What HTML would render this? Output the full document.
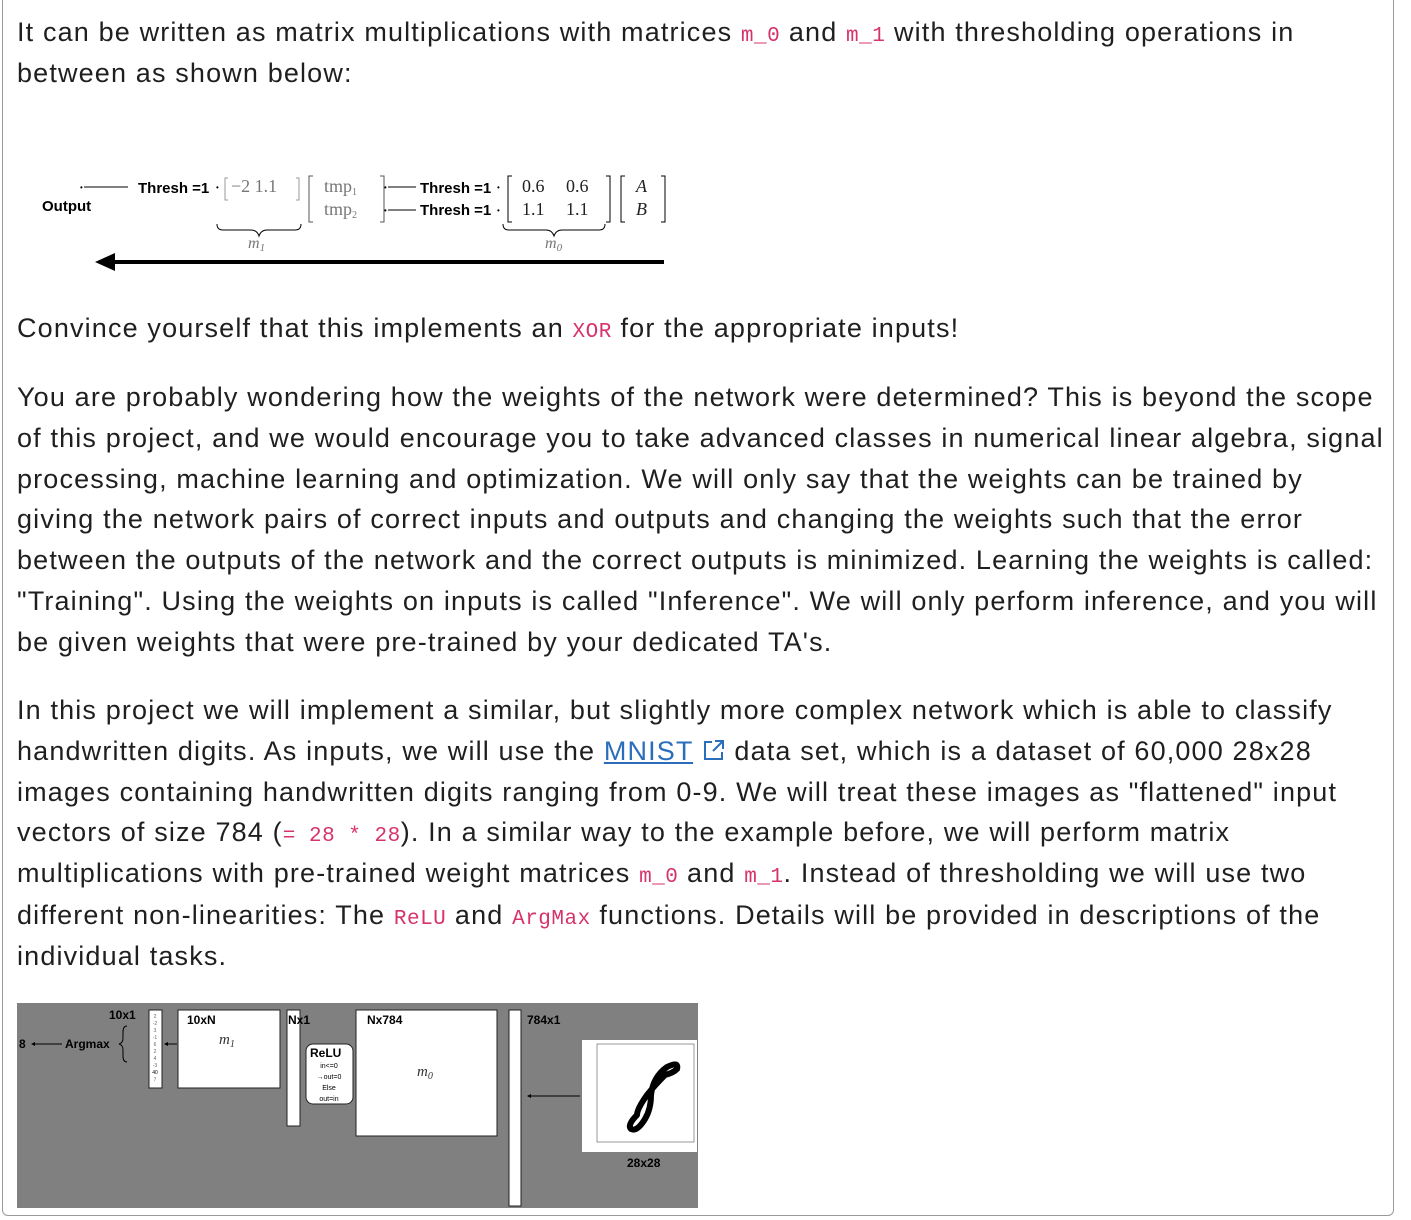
<!DOCTYPE html>
<html><head><meta charset="utf-8"><style>
body{margin:0;background:#fff;width:1411px;height:1220px;position:relative;overflow:hidden;font-family:"Liberation Sans",sans-serif;}
.frame{position:absolute;left:2px;top:-6px;width:1390px;height:1220px;border:1px solid #9a9a9a;border-radius:6px;}
.l{position:absolute;left:17px;height:40px;line-height:40px;white-space:nowrap;font-size:27px;letter-spacing:1.15px;color:#1f1f1f;}
code{font-family:"Liberation Mono",monospace;color:#d6336c;font-size:21px;letter-spacing:0.5px;}
a{color:#2a6ebb;text-decoration:underline;}
</style></head><body>
<div class="frame"></div>
<div class="l" style="top:12px">It can be written as matrix multiplications with matrices <code>m_0</code> and <code>m_1</code> with thresholding operations in</div>
<div class="l" style="top:53px">between as shown below:</div>

<svg style="position:absolute;left:0;top:160px" width="700" height="120" font-family="Liberation Sans,sans-serif">
<g stroke="#000" stroke-width="1" fill="none">
<line x1="84" y1="27" x2="128" y2="27"/>
<line x1="388" y1="27" x2="416" y2="27"/><line x1="388" y1="50" x2="416" y2="50"/>
<path d="M228 18h-3v22h3M296 18h3v22h-3" stroke="#999"/>
<path d="M313 16h-4v46h4M380 16h4v46h-4" stroke="#555"/>
<path d="M512 16h-4v46h4M606 16h4v46h-4"/>
<path d="M625 16h-4v46h4M661 16h4v46h-4"/>
<path d="M217 64q0 6 6 6h28q6 0 8 6q2-6 8-6h28q6 0 6-6"/>
<path d="M503 64q0 6 6 6h37q6 0 8 6q2-6 8-6h37q6 0 6-6"/>
</g>
<g font-size="8"><text x="80" y="30">•</text><text x="216" y="30">•</text><text x="384" y="30">•</text><text x="384" y="53">•</text><text x="497" y="30">•</text><text x="497" y="53">•</text></g>
<g font-size="15" font-weight="bold">
<text x="42" y="51">Output</text>
<text x="138" y="33">Thresh =1</text>
<text x="420" y="33">Thresh =1</text>
<text x="420" y="55">Thresh =1</text>
</g>
<g font-family="Liberation Serif,serif" font-size="18" fill="#777">
<text x="231" y="32">−2  1.1</text>
<text x="324" y="32">tmp<tspan font-size="10" dy="3">1</tspan></text>
<text x="324" y="55">tmp<tspan font-size="10" dy="3">2</tspan></text>
<text x="248" y="88" font-style="italic" font-size="16">m<tspan font-size="11" dy="3">1</tspan></text>
<text x="545" y="88" font-style="italic" font-size="16">m<tspan font-size="11" dy="3">0</tspan></text>
</g>
<g font-family="Liberation Serif,serif" font-size="18" fill="#222">
<text x="522" y="32">0.6</text><text x="566" y="32">0.6</text>
<text x="522" y="55">1.1</text><text x="566" y="55">1.1</text>
<text x="636" y="32" font-style="italic">A</text><text x="636" y="55" font-style="italic">B</text>
</g>
<line x1="110" y1="102" x2="664" y2="102" stroke="#000" stroke-width="4"/>
<path d="M95 102l20-9v18z" fill="#000"/>
</svg>

<div class="l" style="top:308px">Convince yourself that this implements an <code>XOR</code> for the appropriate inputs!</div>

<div class="l" style="top:377px">You are probably wondering how the weights of the network were determined? This is beyond the scope</div>
<div class="l" style="top:418px">of this project, and we would encourage you to take advanced classes in numerical linear algebra, signal</div>
<div class="l" style="top:459px">processing, machine learning and optimization. We will only say that the weights can be trained by</div>
<div class="l" style="top:499px">giving the network pairs of correct inputs and outputs and changing the weights such that the error</div>
<div class="l" style="top:540px">between the outputs of the network and the correct outputs is minimized. Learning the weights is called:</div>
<div class="l" style="top:581px">"Training". Using the weights on inputs is called "Inference". We will only perform inference, and you will</div>
<div class="l" style="top:622px">be given weights that were pre-trained by your dedicated TA's.</div>

<div class="l" style="top:690px">In this project we will implement a similar, but slightly more complex network which is able to classify</div>
<div class="l" style="top:731px">handwritten digits. As inputs, we will use the <a>MNIST</a> <svg width="24" height="24" viewBox="0 0 24 24" style="vertical-align:-2px" fill="none" stroke="#2a6ebb" stroke-width="2"><path d="M10 4H3v17h17v-7M13 3h8v8M21 3L11 13"/></svg> data set, which is a dataset of 60,000 28x28</div>
<div class="l" style="top:772px">images containing handwritten digits ranging from 0-9. We will treat these images as "flattened" input</div>
<div class="l" style="top:812px">vectors of size 784 (<code>= 28 * 28</code>). In a similar way to the example before, we will perform matrix</div>
<div class="l" style="top:853px">multiplications with pre-trained weight matrices <code>m_0</code> and <code>m_1</code>. Instead of thresholding we will use two</div>
<div class="l" style="top:895px">different non-linearities: The <code>ReLU</code> and <code>ArgMax</code> functions. Details will be provided in descriptions of the</div>
<div class="l" style="top:936px">individual tasks.</div>

<svg style="position:absolute;left:17px;top:1003px" width="681" height="205" font-family="Liberation Sans,sans-serif">
<rect width="681" height="205" fill="#808080"/>
<line x1="16" y1="41" x2="45" y2="41" stroke="#000"/><path d="M14 41l4-2v4z"/>
<path d="M110 23q-4 0-4 6v6q0 5-4 6q4 1 4 6v6q0 6 4 6" stroke="#000" fill="none"/>
<rect x="132" y="7" width="13" height="78" fill="#fff" stroke="#222"/>
<g font-size="5" fill="#666" text-anchor="middle"><text x="138" y="15">2</text><text x="138" y="22">-2</text><text x="138" y="29">3</text><text x="138" y="36">-1</text><text x="138" y="43">6</text><text x="138" y="50">2</text><text x="138" y="57">4</text><text x="138" y="64">-3</text><text x="138" y="71" fill="#000">40</text><text x="138" y="78">7</text></g>
<line x1="150" y1="41" x2="160" y2="41" stroke="#000"/><path d="M147 41l4-2v4z"/>
<rect x="161" y="7" width="102" height="78" fill="#fff" stroke="#222"/>
<text x="202" y="41" font-family="Liberation Serif,serif" font-style="italic" font-size="15" fill="#333">m<tspan font-size="10" dy="3">1</tspan></text>
<rect x="270" y="7" width="13" height="116" fill="#fff" stroke="#222"/>
<rect x="289" y="41" width="47" height="60" rx="7" fill="#fff" stroke="#222"/>
<text x="293" y="54" font-size="12" font-weight="bold">ReLU</text>
<g font-size="7" text-anchor="middle"><text x="312" y="65">in&lt;=0</text><text x="312" y="76">→out=0</text><text x="312" y="87">Else</text><text x="312" y="98">out=in</text></g>
<rect x="339" y="7" width="141" height="126" fill="#fff" stroke="#222"/>
<text x="400" y="73" font-family="Liberation Serif,serif" font-style="italic" font-size="15" fill="#333">m<tspan font-size="10" dy="3">0</tspan></text>
<rect x="492" y="7" width="12" height="196" fill="#fff" stroke="#222"/>
<line x1="512" y1="93" x2="563" y2="93" stroke="#000"/><path d="M510 93l4-2v4z"/>
<rect x="565" y="37" width="115" height="112" fill="#fff"/>
<rect x="580" y="41" width="97" height="98" fill="#fff" stroke="#555" stroke-width="0.6"/>
<path d="M620 112q-10 10-6 14q6 3 14-10q6-10 6-24q2-18 16-28q12-6 10 2q-4 4-12 6q-10 10-18 20q-10 14-10 20" stroke="#000" stroke-width="6" fill="none" stroke-linecap="round"/>
<g font-size="12" font-weight="bold" fill="#000">
<text x="92" y="16">10x1</text>
<text x="170" y="21">10xN</text>
<text x="271" y="21">Nx1</text>
<text x="350" y="21">Nx784</text>
<text x="510" y="21">784x1</text>
<text x="610" y="164">28x28</text>
<text x="2" y="45">8</text>
<text x="48" y="45">Argmax</text>
</g>
</svg>
</body></html>
